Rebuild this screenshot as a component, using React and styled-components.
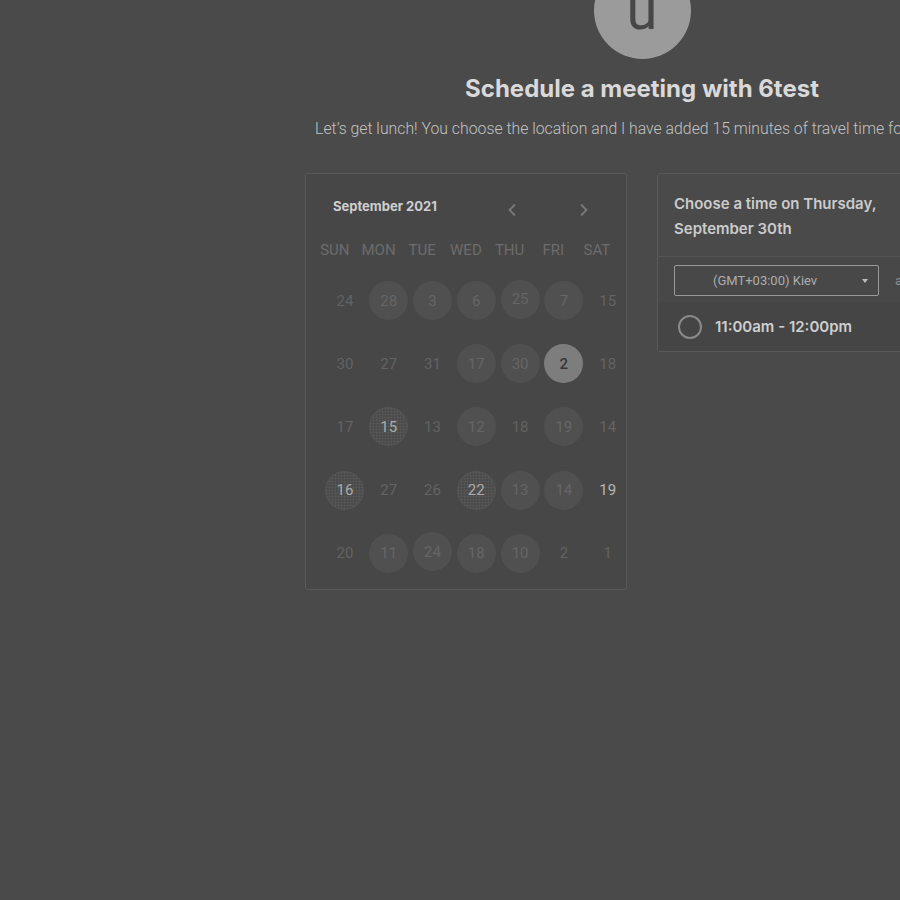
import styled, { createGlobalStyle, css } from "styled-components";

const GlobalStyle = createGlobalStyle`
  html, body {
    margin: 0;
    padding: 0;
    background: #4a4a4a;
    overflow: hidden;
  }
  body {
    font-family: "Roboto", "Liberation Sans", sans-serif;
  }
`;

const Page = styled.main`
  width: 1284px;
  margin-top: -38px;
  display: flex;
  flex-direction: column;
  align-items: center;
`;

const Avatar = styled.div`
  width: 97px;
  height: 97px;
  border-radius: 50%;
  background: #9b9b9b;
  color: #474747;
  font-family: "Roboto", sans-serif;
  font-size: 56px;
  line-height: 97px;
  text-align: center;
`;

const Title = styled.h1`
  margin: 15px 0 0;
  font-family: "Inter", sans-serif;
  font-weight: 700;
  font-size: 24px;
  line-height: 30px;
  color: #d9d9d9;
  letter-spacing: 0;
`;

const Subtitle = styled.p`
  margin: 14px 0 0;
  font-family: "Roboto", sans-serif;
  font-weight: 300;
  font-size: 15.8px;
  line-height: 22px;
  color: #c2c2c2;
  white-space: nowrap;
`;

const Row = styled.div`
  display: flex;
  gap: 30px;
  margin-top: 33px;
  align-items: flex-start;
`;

const Card = styled.section`
  width: 322px;
  box-sizing: border-box;
  border: 1px solid #595959;
  border-radius: 3px;
  background: #474747;
`;

const CalHeader = styled.div`
  display: flex;
  align-items: center;
  height: 66px;
  padding: 0 36px 0 27px;
`;

const MonthLabel = styled.div`
  flex: 1;
  font-family: "Inter", sans-serif;
  font-weight: 700;
  font-size: 13px;
  color: #cfcfcf;
  margin-top: -2px;
`;

const NavButton = styled.span`
  display: flex;
  width: 12px;
  justify-content: center;
  margin-left: ${(p) => p.$gap || 0}px;
  margin-top: 6px;
  color: #7a7a7a;
`;

const WeekHeader = styled.div`
  display: grid;
  grid-template-columns: repeat(7, 43.7px);
  padding-left: 7px;
  height: 22px;
  align-items: center;
  margin-top: -1px;
`;

const WeekDay = styled.div`
  text-align: center;
  font-size: 15px;
  color: #6c6c6c;
`;

const DayGrid = styled.div`
  display: grid;
  grid-template-columns: repeat(7, 43.8px);
  grid-auto-rows: 63.2px;
  padding-left: 17px;
  margin-top: 8px;
  padding-bottom: 4px;
  align-items: center;
`;

const Day = styled.div`
  justify-self: center;
  width: 39px;
  height: 39px;
  border-radius: 50%;
  display: flex;
  align-items: center;
  justify-content: center;
  font-size: 15px;
  color: #636363;
  margin-top: ${(p) => p.$lift || 0}px;
  ${(p) =>
    p.$kind === "avail" &&
    css`
      background: #505050;
      color: #666;
    `}
  ${(p) =>
    p.$kind === "bright" &&
    css`
      color: #b8b8b8;
    `}
  ${(p) =>
    p.$kind === "hatch" &&
    css`
      background: radial-gradient(circle, #585858 0.7px, transparent 1.3px) 0 0 / 3px 3px, #4b4b4b;
      color: #ababab;
      box-shadow: inset 0 0 0 1px rgba(90, 90, 90, 0.6);
    `}
  ${(p) =>
    p.$kind === "selected" &&
    css`
      background: #7d7d7d;
      color: #363636;
      font-weight: 500;
    `}
`;

const TimeCard = styled(Card)`
  background: #4a4a4a;
`;

const TimeHeader = styled.div`
  padding: 17px 16px 15px;
  font-family: "Inter", sans-serif;
  font-weight: 600;
  font-size: 15px;
  line-height: 25px;
  color: #cbcbcb;
  border-bottom: 1px solid #555;
`;

const ZoneRow = styled.div`
  display: flex;
  align-items: center;
  gap: 16px;
  padding: 8px 16px 6px;
  background: #484848;
`;

const ZoneSelect = styled.div`
  width: 205px;
  height: 31px;
  box-sizing: border-box;
  border: 1px solid #9a9a9a;
  border-radius: 2px;
  display: flex;
  align-items: center;
  padding: 0 10px 0 38px;
  font-size: 13px;
  color: #adadad;
  flex-shrink: 0;
`;

const ZoneText = styled.span`
  flex: 1;
`;

const Caret = styled.span`
  width: 0;
  height: 0;
  border-left: 3.5px solid transparent;
  border-right: 3.5px solid transparent;
  border-top: 4px solid #bdbdbd;
`;

const FormatLabel = styled.span`
  font-size: 13px;
  color: #8e8e8e;
  white-space: nowrap;
`;

const SlotRow = styled.div`
  display: flex;
  align-items: center;
  gap: 13px;
  height: 49px;
  padding: 0 16px 0 20px;
  background: #454545;
`;

const Radio = styled.span`
  width: 20px;
  height: 20px;
  border-radius: 50%;
  border: 2px solid #8a8a8a;
`;

const SlotText = styled.span`
  font-family: "Inter", sans-serif;
  font-weight: 600;
  font-size: 15px;
  color: #cfcfcf;
`;

const Chevron = ({ dir }) => (
  <svg width="10" height="14" viewBox="0 0 10 14" fill="none">
    <path
      d={dir === "left" ? "M8 1.5 L2.5 7 L8 12.5" : "M2 1.5 L7.5 7 L2 12.5"}
      stroke="currentColor"
      strokeWidth="1.8"
    />
  </svg>
);

const weekDays = ["SUN", "MON", "TUE", "WED", "THU", "FRI", "SAT"];

const days = [
  ["24"], ["28", "avail"], ["3", "avail"], ["6", "avail"], ["25", "avail", -3], ["7", "avail"], ["15"],
  ["30"], ["27"], ["31"], ["17", "avail"], ["30", "avail"], ["2", "selected"], ["18"],
  ["17"], ["15", "hatch"], ["13"], ["12", "avail"], ["18"], ["19", "avail"], ["14"],
  ["16", "hatch"], ["27"], ["26"], ["22", "hatch"], ["13", "avail"], ["14", "avail"], ["19", "bright"],
  ["20"], ["11", "avail"], ["24", "avail", -3], ["18", "avail"], ["10", "avail"], ["2"], ["1"],
];

export default function App() {
  return (
    <>
      <GlobalStyle />
      <Page>
        <Avatar>u</Avatar>
        <Title>Schedule a meeting with 6test</Title>
        <Subtitle>
          Let’s get lunch! You choose the location and I have added 15 minutes of travel time for lunches.
        </Subtitle>
        <Row>
          <Card>
            <CalHeader>
              <MonthLabel>September 2021</MonthLabel>
              <NavButton>
                <Chevron dir="left" />
              </NavButton>
              <NavButton $gap={60}>
                <Chevron dir="right" />
              </NavButton>
            </CalHeader>
            <WeekHeader>
              {weekDays.map((d) => (
                <WeekDay key={d}>{d}</WeekDay>
              ))}
            </WeekHeader>
            <DayGrid>
              {days.map(([n, kind, lift], i) => (
                <Day key={i} $kind={kind} $lift={lift}>
                  {n}
                </Day>
              ))}
            </DayGrid>
          </Card>
          <TimeCard>
            <TimeHeader>
              Choose a time on Thursday,
              <br />
              September 30th
            </TimeHeader>
            <ZoneRow>
              <ZoneSelect>
                <ZoneText>(GMT+03:00) Kiev</ZoneText>
                <Caret />
              </ZoneSelect>
              <FormatLabel>am/pm</FormatLabel>
            </ZoneRow>
            <SlotRow>
              <Radio />
              <SlotText>11:00am - 12:00pm</SlotText>
            </SlotRow>
          </TimeCard>
        </Row>
      </Page>
    </>
  );
}
